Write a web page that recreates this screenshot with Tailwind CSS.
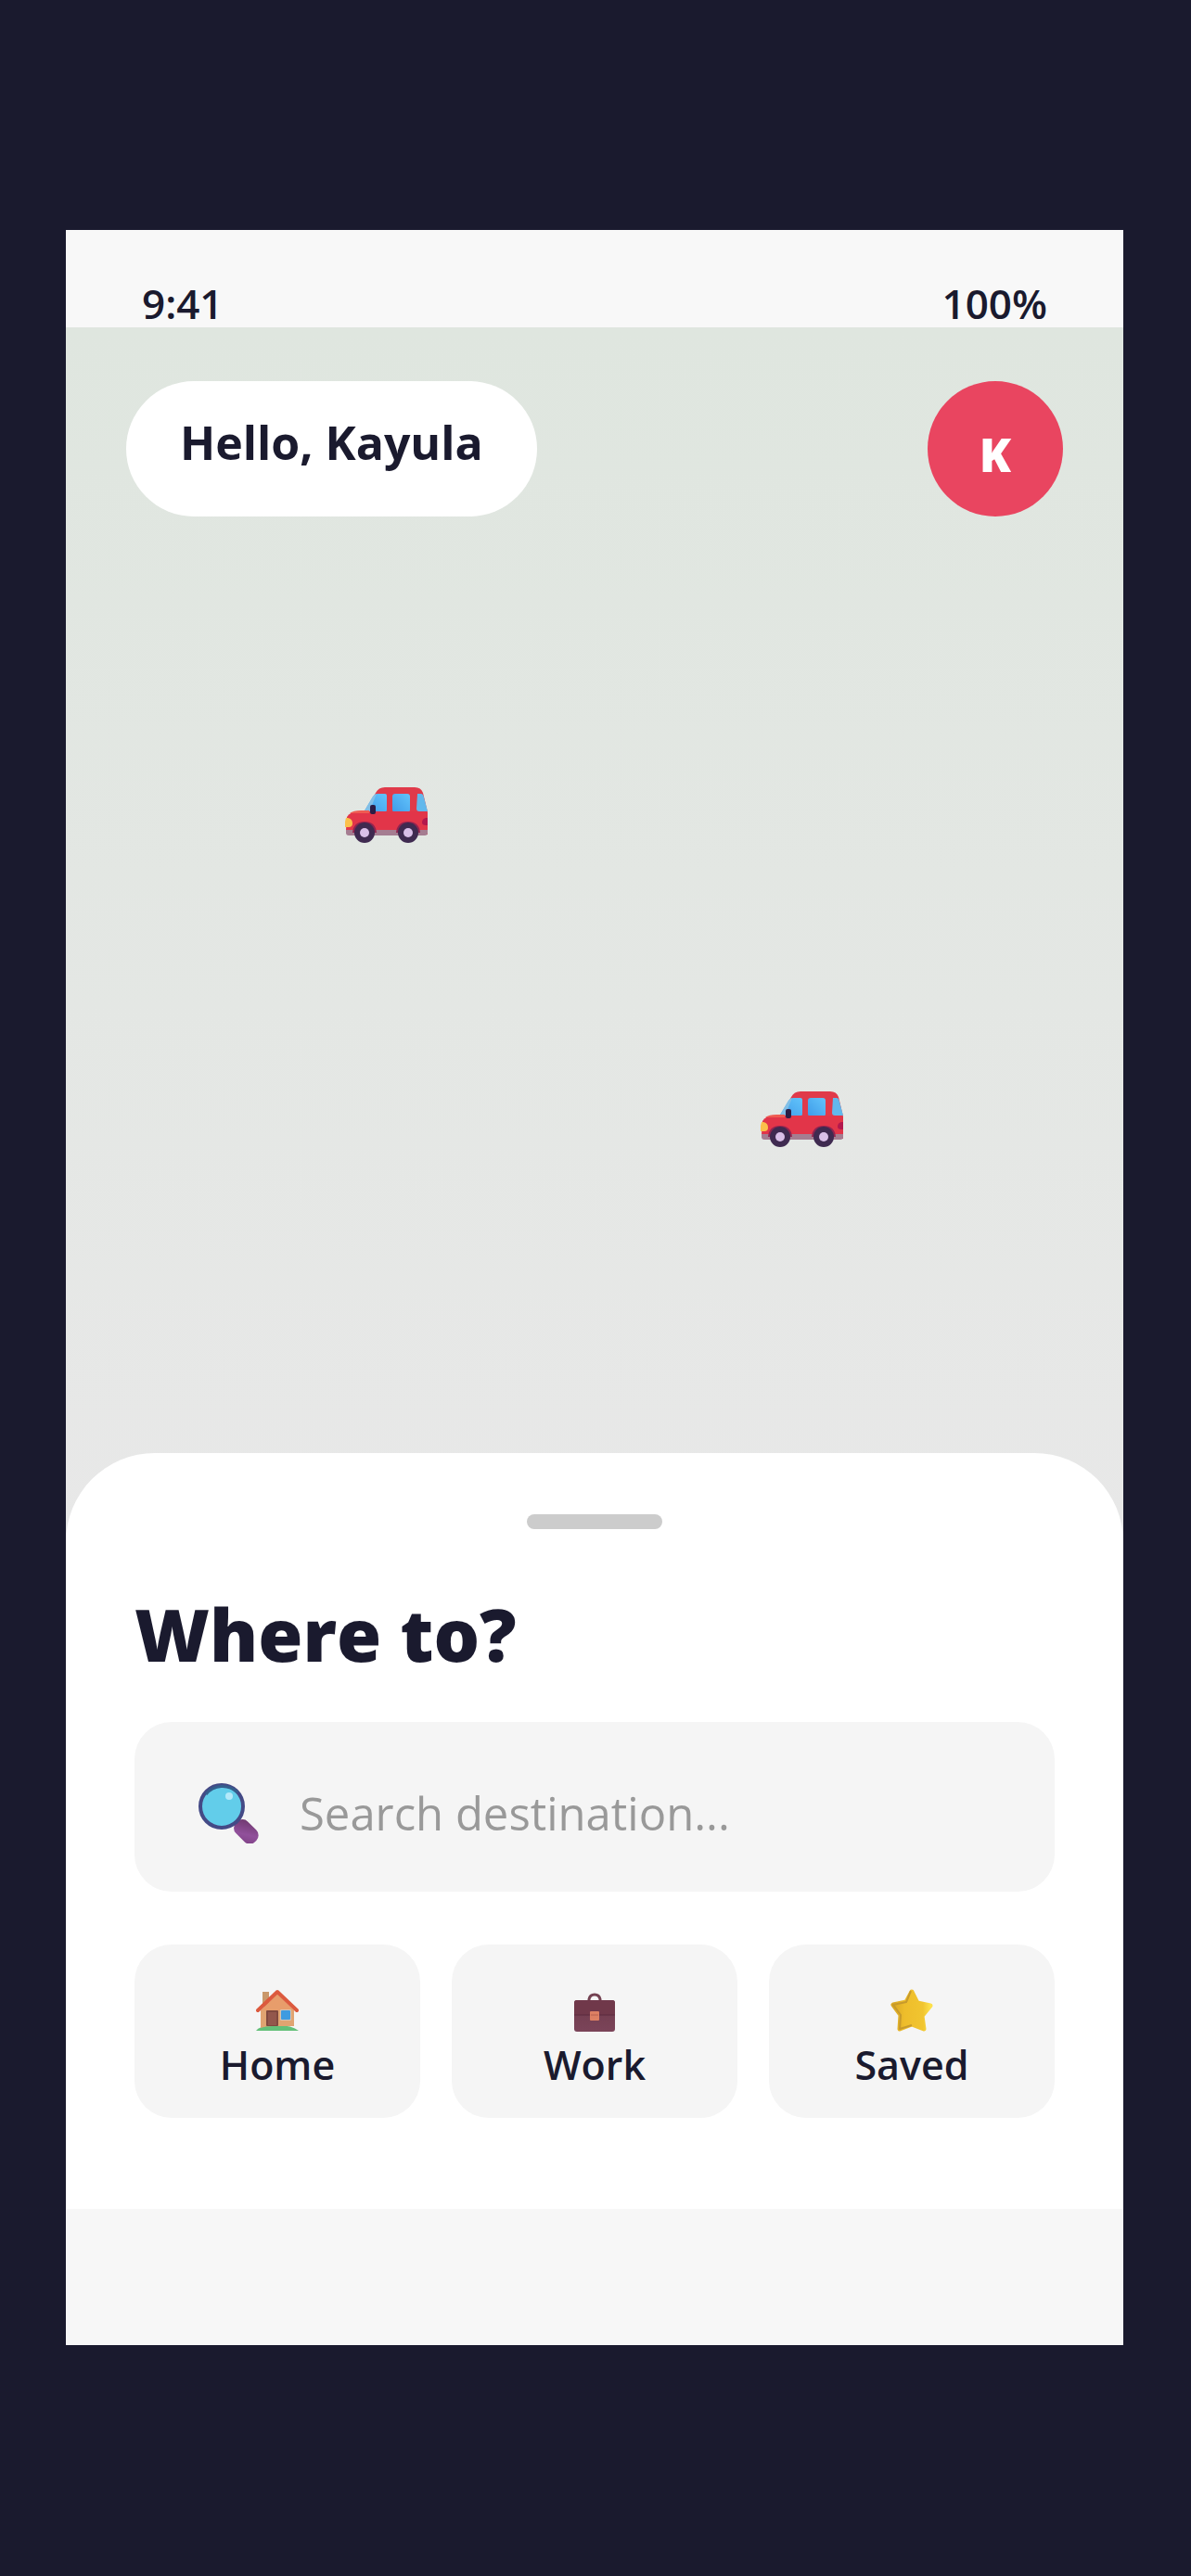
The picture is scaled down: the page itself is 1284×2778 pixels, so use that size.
<!DOCTYPE html>
<html lang="en">

<head>
    <meta charset="UTF-8" />
    <meta name="viewport" content="width=device-width, initial-scale=1.0" />
    <title>Where to?</title>
    <script src="https://cdn.jsdelivr.net/npm/@tailwindcss/browser@4"></script>
</head>

<body class="min-h-screen flex flex-col bg-[#1a1a2e] pt-[248px] pb-[249px] pl-[71px] pr-[73px] text-[#1a1a2e] font-['Open_Sans','Noto_Sans',sans-serif]">
    <!-- Shared gradients and the car symbol -->
    <svg class="absolute size-0" aria-hidden="true">
        <defs>
            <linearGradient id="glass" x1="0" y1="1" x2="1" y2="0">
                <stop offset="0" stop-color="#3f9be8" />
                <stop offset="1" stop-color="#62c4fb" />
            </linearGradient>
            <linearGradient id="starFill" x1="0" y1="0" x2="1" y2="0">
                <stop offset="0" stop-color="#d9a826" />
                <stop offset="0.3" stop-color="#eebd2b" />
                <stop offset="0.8" stop-color="#f1c530" />
                <stop offset="1" stop-color="#fde04a" />
            </linearGradient>
            <linearGradient id="leather" x1="0" y1="0" x2="0" y2="1">
                <stop offset="0" stop-color="#6f3b4c" />
                <stop offset="1" stop-color="#7b4459" />
            </linearGradient>
            <linearGradient id="handle" x1="0" y1="0" x2="1" y2="1">
                <stop offset="0" stop-color="#6b3569" />
                <stop offset="0.6" stop-color="#91509b" />
                <stop offset="1" stop-color="#7d3f83" />
            </linearGradient>
            <symbol id="car" viewBox="0 0 90 62">
                <path d="M21 28 L33 7 Q36 1 43 1 H75 Q82 1 84 7 L89 28 V45 H21Z" fill="#e03a4a" />
                <path d="M20 28 L30 11 Q32 8 35 8 H43 Q45 8 45 10 V25 Q45 28 42 28Z" fill="url(#glass)" />
                <path d="M20 28 L30 11 Q32 8 34 8 L26 28Z" fill="#82bfe6" />
                <rect x="51" y="8" width="19" height="20" rx="3" fill="url(#glass)" />
                <path d="M78 8 H82 Q84 8 85 12 L89 27 H80 Q77 27 77 24Z" fill="#62b8ec" />
                <path d="M2 33 Q5 27 16 27 H86 Q89 27 89 30 V52 H4 Q1 52 1 47Z" fill="#e23549" />
                <path d="M5 29 Q9 26 17 26 H26 V29Z" fill="#ef5b52" />
                <path d="M1 47 H89 V50 Q89 53 86 53 H4 Q1 53 1 50Z" fill="#a57d91" />
                <path d="M1 34 H3 Q8 35 8 40 Q8 44 4 44 H0 V38Z" fill="#fbc04b" />
                <path d="M89 34 H87 Q83 35 83 39 Q83 42 87 42 H89Z" fill="#b3184d" />
                <rect x="27" y="20" width="6" height="10" rx="2" fill="#2b1d45" />
                <path d="M8 50 Q9 38 21 38 Q33 38 34 50Z" fill="#912450" />
                <path d="M55 50 Q56 38 68 38 Q80 38 81 50Z" fill="#912450" />
                <circle cx="21" cy="50" r="11" fill="#3f2a50" />
                <circle cx="68" cy="50" r="11" fill="#3f2a50" />
                <circle cx="21" cy="50" r="5" fill="#d9bfe8" />
                <circle cx="68" cy="50" r="5" fill="#d9bfe8" />
            </symbol>
        </defs>
    </svg>

    <!-- Screen -->
    <div class="flex-1 flex flex-col bg-[#f8f8f8]">

        <!-- Status bar -->
        <div class="flex justify-between h-[105px] pt-[51px] px-[82px] text-[44px] leading-[56px] font-semibold">
            <span>9:41</span>
            <span>100%</span>
        </div>

        <!-- Map -->
        <main class="relative flex-1 min-h-[800px] bg-linear-to-b from-[#dfe6df] to-[#e8e8e8]">
            <header class="flex justify-between px-[65px] pt-[58px]">
                <div class="h-[146px] rounded-full bg-white px-[58px] pt-[34px] text-[50px] leading-[64px] font-bold">Hello, Kayula</div>
                <button type="button" aria-label="Profile" class="size-[146px] rounded-full bg-[#e94560] pt-3 text-[50px] leading-[64px] font-extrabold text-white">K</button>
            </header>
            <svg class="absolute left-[26.4%] top-[37.8%] w-[90px] h-[62px]" role="img" aria-label="Car"><use href="#car" /></svg>
            <svg class="absolute left-[65.7%] top-[62.8%] w-[90px] h-[62px]" role="img" aria-label="Car"><use href="#car" /></svg>
        </main>

        <!-- Bottom sheet -->
        <section class="relative -mt-24 rounded-t-[96px] bg-white px-[74px] pt-[66px] pb-[98px]">
            <div class="mx-auto h-4 w-[146px] rounded-full bg-[#ccc]"></div>
            <h1 class="mt-[69px] text-[78px] leading-[88px] font-extrabold">Where to?</h1>

            <label class="mt-[51px] flex items-center gap-11 h-[183px] rounded-[40px] bg-[#f5f5f5] pl-[68px] pr-10 pt-3">
                <svg class="shrink-0 size-[66px]" viewBox="0 0 66 66" aria-hidden="true">
                    <rect x="38" y="44" width="29" height="18" rx="8" transform="rotate(45 52 53)" fill="url(#handle)" />
                    <circle cx="26" cy="26" r="23" fill="#62cdea" stroke="#444a86" stroke-width="4" />
                    <path d="M9 13 A23 23 0 0 1 43 11" fill="none" stroke="#345f8d" stroke-width="3" />
                    <circle cx="34" cy="15" r="4" fill="#b3e9fa" />
                </svg>
                <input type="text" aria-label="Search destination" placeholder="Search destination..." class="min-w-0 flex-1 bg-transparent text-[49px] leading-[64px] outline-none placeholder:text-[#999]" />
            </label>

            <div class="mt-[57px] grid grid-cols-3 gap-[34px]">
                <button type="button" class="flex flex-col items-center gap-3 rounded-[40px] bg-[#f5f5f5] pt-12 pb-[33px] text-[43px] leading-[48px] font-semibold">
                    <svg class="size-[46px]" viewBox="0 0 46 46" aria-hidden="true">
                        <path d="M0 45 Q3 40 18 39 Q38 38 46 45Z" fill="#63c078" />
                        <rect x="7" y="3" width="7" height="16" fill="#c9986b" />
                        <path d="M5 23 L23 5 L41 23 V40 H18 Q10 40 5 42Z" fill="#e0a471" />
                        <path d="M23 6 L41 23 H5Z" fill="#e89d6b" />
                        <path d="M2 23 L23 3 L44 23" fill="none" stroke="#dc5a3e" stroke-width="4" stroke-linecap="round" stroke-linejoin="round" />
                        <rect x="11" y="23" width="13" height="17" rx="1" fill="#80493f" />
                        <rect x="13" y="25" width="9" height="14" fill="#93574c" />
                        <rect x="26" y="22" width="12" height="12" rx="1" fill="#d6c3b2" />
                        <rect x="27" y="23" width="10" height="10" rx="1" fill="#3f9be0" />
                    </svg>
                    Home
                </button>
                <button type="button" class="flex flex-col items-center gap-3 rounded-[40px] bg-[#f5f5f5] pt-12 pb-[33px] text-[43px] leading-[48px] font-semibold">
                    <svg class="size-[46px]" viewBox="0 0 46 46" aria-hidden="true">
                        <path d="M17 13 V11 Q18 6 23 6 Q28 6 29 11 V13" fill="none" stroke="#744252" stroke-width="3" />
                        <rect x="1" y="12" width="44" height="34" rx="3" fill="url(#leather)" />
                        <path d="M1 15 Q1 12 4 12 H42 Q45 12 45 15 V28 H1Z" fill="#70384a" />
                        <path d="M1 28 H45" stroke="#5a2b3e" stroke-width="1" />
                        <rect x="18" y="24" width="10" height="10" rx="1" fill="#dd8063" />
                        <path d="M19 28 H27" stroke="#b8604f" stroke-width="1" />
                    </svg>
                    Work
                </button>
                <button type="button" class="flex flex-col items-center gap-3 rounded-[40px] bg-[#f5f5f5] pt-12 pb-[33px] text-[43px] leading-[48px] font-semibold">
                    <svg class="size-[46px]" viewBox="0 0 46 46" aria-hidden="true">
                        <path d="M23 3 L29 15 L43 18 L34 29 L36 43 L23 38 L10 43 L11 28 L3 17 L17 14Z" fill="url(#starFill)" stroke="url(#starFill)" stroke-width="5" stroke-linejoin="round" />
                        <path d="M22 2 L17 14 L3 17 L11 28 L10 43 L23 39" fill="none" stroke="#c79a2c" stroke-width="2" stroke-linejoin="round" />
                    </svg>
                    Saved
                </button>
            </div>
        </section>

        <div class="h-[147px] bg-[#f7f7f7]"></div>
    </div>
</body>

</html>
